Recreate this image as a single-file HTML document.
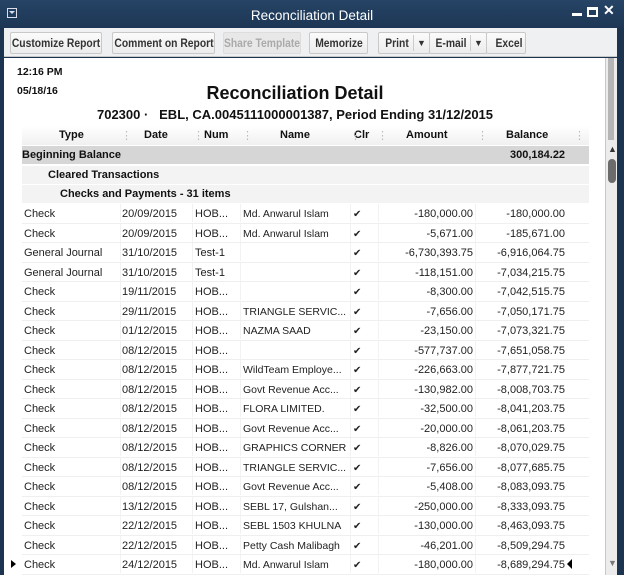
<!DOCTYPE html>
<html><head><style>
*{margin:0;padding:0;box-sizing:border-box}
body{width:624px;height:575px;overflow:hidden;background:#1d3450;font-family:"Liberation Sans",sans-serif;position:relative}
.title{position:absolute;left:0;top:0;width:624px;height:28px;background:linear-gradient(#264466,#1d3654);color:#fff;font-size:13.5px;text-align:center;line-height:32px}
.tb{position:absolute;left:4px;top:28px;width:613px;height:29px;background:#eef0f2;border-bottom:1px solid #c8c8c8}
.btn{position:absolute;top:4px;height:22px;border:1px solid #c9c9c9;border-radius:2px;background:linear-gradient(#fbfbfb,#ececec);font-size:12px;font-weight:bold;color:#333;line-height:20px;white-space:nowrap}
.btn i{font-style:normal;position:absolute;left:50%;top:0;transform:translateX(-50%) scaleX(.86)}
.content{position:absolute;left:4px;top:58px;width:601px;height:517px;background:#fff;overflow:hidden}
.sb{position:absolute;left:605px;top:58px;width:12px;height:517px;background:#ececec;border-left:1px solid #c8c8c8}
.t{position:absolute;font-size:11px;color:#111;white-space:nowrap}
.b{font-weight:bold}
.row{position:absolute;left:18px;width:567px;height:19.5px;font-size:11px;color:#222}
.row span{position:absolute;top:4px;white-space:nowrap}
.cell{position:absolute;top:0;height:18px;border-right:1px solid #f2f2f2}
.dd{position:absolute;top:2px;height:16px;border-left:1px solid #ccc;width:16px;font-size:9px;line-height:16px;text-align:center}
</style></head><body>
<div class="title">Reconciliation Detail</div>
<div style="position:absolute;left:7px;top:8px;width:10px;height:10px;border:1px solid #dde;"><div style="margin:2px auto;width:0;height:0;border-left:3px solid transparent;border-right:3px solid transparent;border-top:3px solid #dde"></div></div>
<div style="position:absolute;left:572px;top:13px;width:10px;height:3px;background:#fff"></div>
<div style="position:absolute;left:587px;top:7px;width:11px;height:10px;border:2px solid #fff;border-top-width:3px"></div>
<div style="position:absolute;left:603px;top:2px;color:#fff;font-size:14px;font-weight:bold">✕</div>
<div class="tb">
<div class="btn" style="left:6px;width:92px"><i>Customize Report</i></div>
<div class="btn" style="left:108px;width:103px"><i>Comment on Report</i></div>
<div class="btn" style="left:219px;width:78px;color:#aaa;background:#e8e8e8;border-color:#ddd"><i>Share Template</i></div>
<div class="btn" style="left:305px;width:59px"><i>Memorize</i></div>
<div class="btn" style="left:374px;width:52px"><i style="left:18px">Print</i><div class="dd" style="left:34px">▼</div></div>
<div class="btn" style="left:425px;width:58px"><i style="left:21px">E-mail</i><div class="dd" style="left:40px">▼</div></div>
<div class="btn" style="left:482px;width:40px"><i style="left:22px">Excel</i></div>
</div>
<div class="content">
<div class="t b" style="left:13px;top:8px;font-size:10.5px">12:16 PM</div>
<div class="t b" style="left:13px;top:27px;font-size:10.5px">05/18/16</div>
<div class="t b" style="left:0;width:582px;text-align:center;top:25px;font-size:18px">Reconciliation Detail</div>
<div class="t b" style="left:0;width:582px;text-align:center;top:49px;font-size:13px">702300 · &nbsp; EBL, CA.0045111000001387, Period Ending 31/12/2015</div>
<div style="position:absolute;left:18px;top:68px;width:567px;height:19px;background:linear-gradient(#fff,#f0f0f0)"></div>
<div class="t b" style="left:55px;top:71px">Type</div>
<div class="t b" style="left:140px;top:71px">Date</div>
<div class="t b" style="left:200px;top:71px">Num</div>
<div class="t b" style="left:276px;top:71px">Name</div>
<div class="t b" style="left:350px;top:71px">Clr</div>
<div class="t b" style="left:402px;top:71px">Amount</div>
<div class="t b" style="left:502px;top:71px">Balance</div>
<div class="t" style="left:117px;top:71px;color:#bbb">⋮</div><div class="t" style="left:189px;top:71px;color:#bbb">⋮</div><div class="t" style="left:238px;top:71px;color:#bbb">⋮</div><div class="t" style="left:346px;top:71px;color:#bbb">⋮</div><div class="t" style="left:373px;top:71px;color:#bbb">⋮</div><div class="t" style="left:473px;top:71px;color:#bbb">⋮</div><div class="t" style="left:570px;top:71px;color:#bbb">⋮</div>
<div style="position:absolute;left:18px;top:88px;width:567px;height:18px;background:#d6d6d6"></div>
<div class="t b" style="left:18px;top:91px">Beginning Balance</div>
<div class="t b" style="left:506px;top:91px">300,184.22</div>
<div style="position:absolute;left:18px;top:108px;width:567px;height:18px;background:#f3f3f3"></div>
<div class="t b" style="left:44px;top:111px">Cleared Transactions</div>
<div style="position:absolute;left:18px;top:127px;width:567px;height:18px;background:#f3f3f3"></div>
<div class="t b" style="left:56px;top:130px">Checks and Payments - 31 items</div>
<div id="rows"></div>
</div>
<div class="sb">
<div style="position:absolute;left:2px;top:86px;font-size:9px;color:#333">▲</div>
<div style="position:absolute;left:2px;top:101px;width:8px;height:24px;background:#6b6b6b;border-radius:4px"></div>
<div style="position:absolute;left:2px;top:500px;font-size:9px;color:#777">▼</div>
<div style="position:absolute;left:2px;top:0;width:6px;height:82px;background:#b5b5b5"></div>
</div>
<div style="position:absolute;left:11px;top:560px;width:0;height:0;border-top:4px solid transparent;border-bottom:4px solid transparent;border-left:5px solid #000"></div>
<div style="position:absolute;left:567px;top:559px;width:0;height:0;border-top:5px solid transparent;border-bottom:5px solid transparent;border-right:5px solid #000"></div>
<script>
var d=[["Check","20/09/2015","HOB...","Md. Anwarul Islam","-180,000.00","-180,000.00"],
["Check","20/09/2015","HOB...","Md. Anwarul Islam","-5,671.00","-185,671.00"],
["General Journal","31/10/2015","Test-1","","-6,730,393.75","-6,916,064.75"],
["General Journal","31/10/2015","Test-1","","-118,151.00","-7,034,215.75"],
["Check","19/11/2015","HOB...","","-8,300.00","-7,042,515.75"],
["Check","29/11/2015","HOB...","TRIANGLE SERVIC...","-7,656.00","-7,050,171.75"],
["Check","01/12/2015","HOB...","NAZMA SAAD","-23,150.00","-7,073,321.75"],
["Check","08/12/2015","HOB...","","-577,737.00","-7,651,058.75"],
["Check","08/12/2015","HOB...","WildTeam Employe...","-226,663.00","-7,877,721.75"],
["Check","08/12/2015","HOB...","Govt Revenue Acc...","-130,982.00","-8,008,703.75"],
["Check","08/12/2015","HOB...","FLORA LIMITED.","-32,500.00","-8,041,203.75"],
["Check","08/12/2015","HOB...","Govt Revenue Acc...","-20,000.00","-8,061,203.75"],
["Check","08/12/2015","HOB...","GRAPHICS CORNER","-8,826.00","-8,070,029.75"],
["Check","08/12/2015","HOB...","TRIANGLE SERVIC...","-7,656.00","-8,077,685.75"],
["Check","08/12/2015","HOB...","Govt Revenue Acc...","-5,408.00","-8,083,093.75"],
["Check","13/12/2015","HOB...","SEBL 17, Gulshan...","-250,000.00","-8,333,093.75"],
["Check","22/12/2015","HOB...","SEBL 1503 KHULNA","-130,000.00","-8,463,093.75"],
["Check","22/12/2015","HOB...","Petty Cash Malibagh","-46,201.00","-8,509,294.75"],
["Check","24/12/2015","HOB...","Md. Anwarul Islam","-180,000.00","-8,689,294.75"]];
var h="";d.forEach(function(r,i){var t=146+i*19.5;
h+='<div class="row" style="top:'+t+'px;border-bottom:1px solid #efefef">'+
'<div class="cell" style="left:0;width:99px"></div><div class="cell" style="left:99px;width:72px"></div><div class="cell" style="left:171px;width:48px"></div><div class="cell" style="left:219px;width:110px"></div><div class="cell" style="left:329px;width:28px"></div><div class="cell" style="left:357px;width:97px"></div>'+
'<span style="left:2px">'+r[0]+'</span><span style="left:100px">'+r[1]+'</span><span style="left:173px">'+r[2]+'</span><span style="left:221px;font-size:10.5px">'+r[3]+'</span><span style="left:331px;font-size:10px;top:5px">✔</span><span style="right:116px">'+r[4]+'</span><span style="right:24px">'+r[5]+'</span></div>';});
document.getElementById("rows").innerHTML=h;
</script>
</body></html>
